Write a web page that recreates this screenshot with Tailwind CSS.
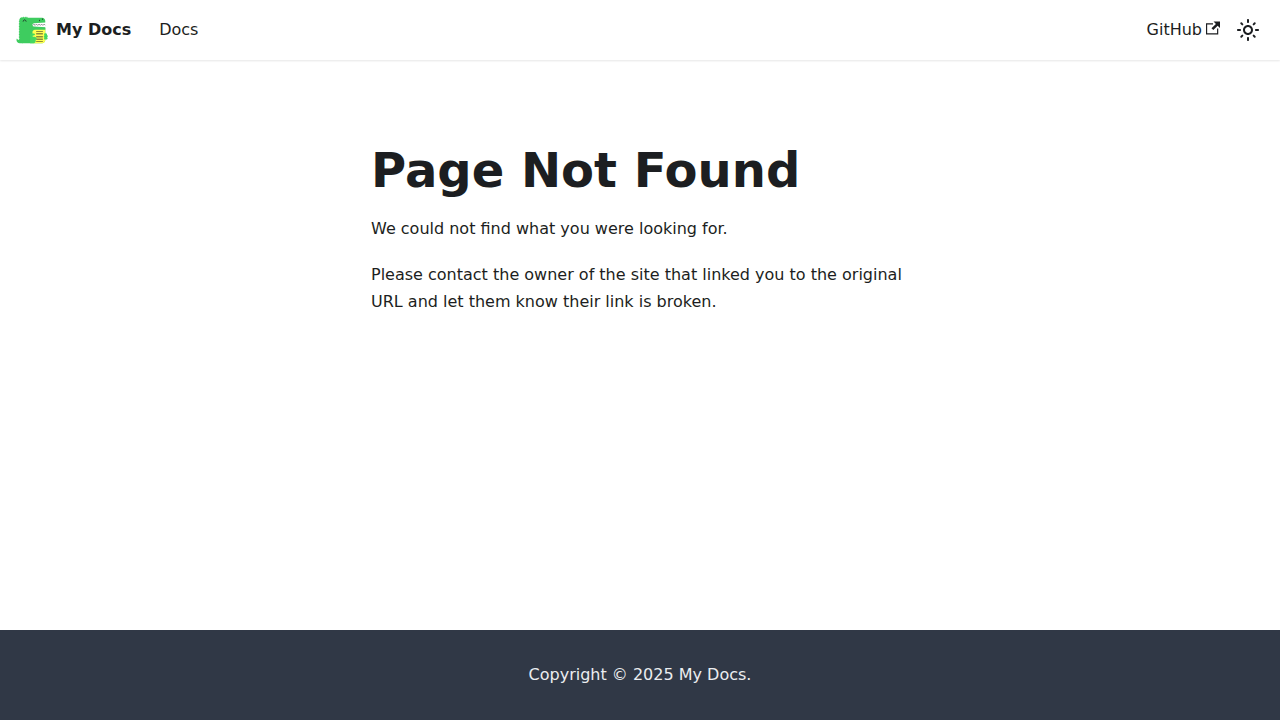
<!DOCTYPE html>
<html lang="en">
<head>
<meta charset="utf-8">
<meta name="viewport" content="width=device-width, initial-scale=1">
<title>Page Not Found | My Docs</title>
<script src="https://cdn.jsdelivr.net/npm/@tailwindcss/browser@4"></script>
</head>
<body class="flex min-h-screen flex-col bg-white font-['DejaVu_Sans',sans-serif] text-base leading-[27px] text-[#1c1e21]">
<nav aria-label="Main" class="flex h-15 shrink-0 items-center justify-between px-4 leading-[26px] shadow-[0_1px_2px_0_rgba(0,0,0,0.1)]">
  <div class="flex items-center">
    <a href="#" class="mr-4 flex items-center gap-2 font-bold">
      <svg class="size-8" viewBox="0 0 200 200" fill="none" aria-hidden="true">
        <path fill="#fff" d="M99 52h84v34H99z"/>
        <path fill="#3ecc5f" d="M23 163c-7.4 0-13.8-4-17.3-10A19.9 19.9 0 0 0 3 163c0 11 9 20 20 20h20v-20H23z"/>
        <path fill="#3ecc5f" d="M113 57.4 183 53V43c0-11-9-20-20-20H73l-2.5-4.3c-1.1-2-3.9-2-5 0L63 23l-2.5-4.3c-1.1-2-3.9-2-5 0L53 23l-2.5-4.3c-1.1-2-3.9-2-5 0L43 23l-4.2-4.1c-1.6-1.6-4.3-.9-4.8 1.3l-1.4 5.1-5.2-1.4c-2.1-.6-4.1 1.4-3.5 3.5l1.4 5.2-5.1 1.4c-2.2.6-2.9 3.3-1.3 4.8L23 43l-4.3 2.5c-2 1.1-2 3.9 0 5L23 53l-4.3 2.5c-2 1.1-2 3.9 0 5L23 63l-4.3 2.5c-2 1.1-2 3.9 0 5L23 73l-4.3 2.5c-2 1.1-2 3.9 0 5L23 83l-4.3 2.5c-2 1.1-2 3.9 0 5L23 93l-4.3 2.5c-2 1.1-2 3.9 0 5L23 103l-4.3 2.5c-2 1.1-2 3.9 0 5L23 113l-4.3 2.5c-2 1.1-2 3.9 0 5L23 123l-4.3 2.5c-2 1.1-2 3.9 0 5L23 133l-4.3 2.5c-2 1.1-2 3.9 0 5L23 143l-4.3 2.5c-2 1.1-2 3.9 0 5L23 153l-4.3 2.5c-2 1.1-2 3.9 0 5L23 163c0 11 9 20 20 20h120c11 0 20-9 20-20V83l-70-4.4A10.6 10.6 0 0 1 103 68c0-5.6 4.4-10.3 10-10.6"/>
        <path fill="#ffff50" d="M103 183h60c11 0 20-9 20-20V93h-60c-11 0-20 9-20 20v70z"/>
        <path fill="#3ecc5f" d="M95 86h88v12H115l-12 7h-8z"/>
        <path fill="#1c1e21" d="M168 112h-42v-3h42zm0 20h-42v-3h42zm0 20h-42v-3h42zm0-30h-42v-3h42zm0 20h-42v-3h42zm0 30h-42v-3h42zm0-10h-42v-3h42z"/>
        <path fill="#44d860" d="M100 122h9c7 0 12 5 8 10-2 3-9 3-14 3v9c9-4 20-1 25 6 4 6 0 11-6 11 4 9-1 22-13 22H88v-61zM183 120c8 0 13 5 10 12 8 3 8 10 1 13 8 5 3 16-9 15h-7c-5-4-3-10 0-12-6-3-6-10 0-13-5-8-2-15 5-15z"/>
        <path stroke="#1c1e21" stroke-width="5" stroke-linecap="round" d="M45 45c2-12 15-12 18 0M147 42v-3m19-5v-3"/>
        <path stroke="#1c1e21" stroke-width="3" d="m105 71 7-7 8 7 8-8 8 8 8-8 8 8 8-8 8 8 8-8 7 7"/>
      </svg>
      <span>My Docs</span>
    </a>
    <a href="#" class="px-3">Docs</a>
  </div>
  <div class="flex items-center">
    <a href="#" class="flex items-center px-3">GitHub
      <svg class="mb-1 ml-1 size-3.5" viewBox="0 0 24 24" fill="currentColor" aria-hidden="true"><path d="M21 13v10H0V4h12v2H2v15h17v-8h2zm3-12H13l4 4-7.6 7.5 3.1 3.1L20 8l4 4V1z"/></svg>
    </a>
    <button type="button" aria-label="Switch between dark and light mode" class="flex size-8 items-center justify-center rounded-full">
      <svg class="size-6" viewBox="0 0 24 24" fill="currentColor" aria-hidden="true"><path d="M12 9c1.65 0 3 1.35 3 3s-1.35 3-3 3-3-1.35-3-3 1.35-3 3-3m0-2c-2.76 0-5 2.24-5 5s2.24 5 5 5 5-2.24 5-5-2.24-5-5-5zM2 13h2c.55 0 1-.45 1-1s-.45-1-1-1H2c-.55 0-1 .45-1 1s.45 1 1 1zm18 0h2c.55 0 1-.45 1-1s-.45-1-1-1h-2c-.55 0-1 .45-1 1s.45 1 1 1zM11 2v2c0 .55.45 1 1 1s1-.45 1-1V2c0-.55-.45-1-1-1s-1 .45-1 1zm0 18v2c0 .55.45 1 1 1s1-.45 1-1v-2c0-.55-.45-1-1-1s-1 .45-1 1zM5.99 4.58a.996.996 0 0 0-1.41 1.41l1.06 1.06a.996.996 0 1 0 1.41-1.41L5.99 4.58zm12.37 12.37a.996.996 0 0 0-1.41 1.41l1.06 1.06a.996.996 0 1 0 1.41-1.41l-1.06-1.06zm1.06-10.96a.996.996 0 0 0-1.41-1.41l-1.06 1.06a.996.996 0 1 0 1.41 1.41l1.06-1.06zM7.05 18.36a.996.996 0 0 0-1.41-1.41l-1.06 1.06a.996.996 0 1 0 1.41 1.41l1.06-1.06z"/></svg>
    </button>
  </div>
</nav>
<main class="mx-auto w-full max-w-[570px] grow px-4 py-20">
  <h1 class="mb-[15px] text-5xl leading-[60px] font-bold">Page Not Found</h1>
  <p class="mb-[19px]">We could not find what you were looking for.</p>
  <p>Please contact the owner of the site that linked you to the original URL and let them know their link is broken.</p>
</main>
<footer class="shrink-0 bg-[#303846] px-8 pt-[31px] pb-8 text-center text-[#ebedf0]">Copyright © 2025 My Docs.</footer>
</body>
</html>
